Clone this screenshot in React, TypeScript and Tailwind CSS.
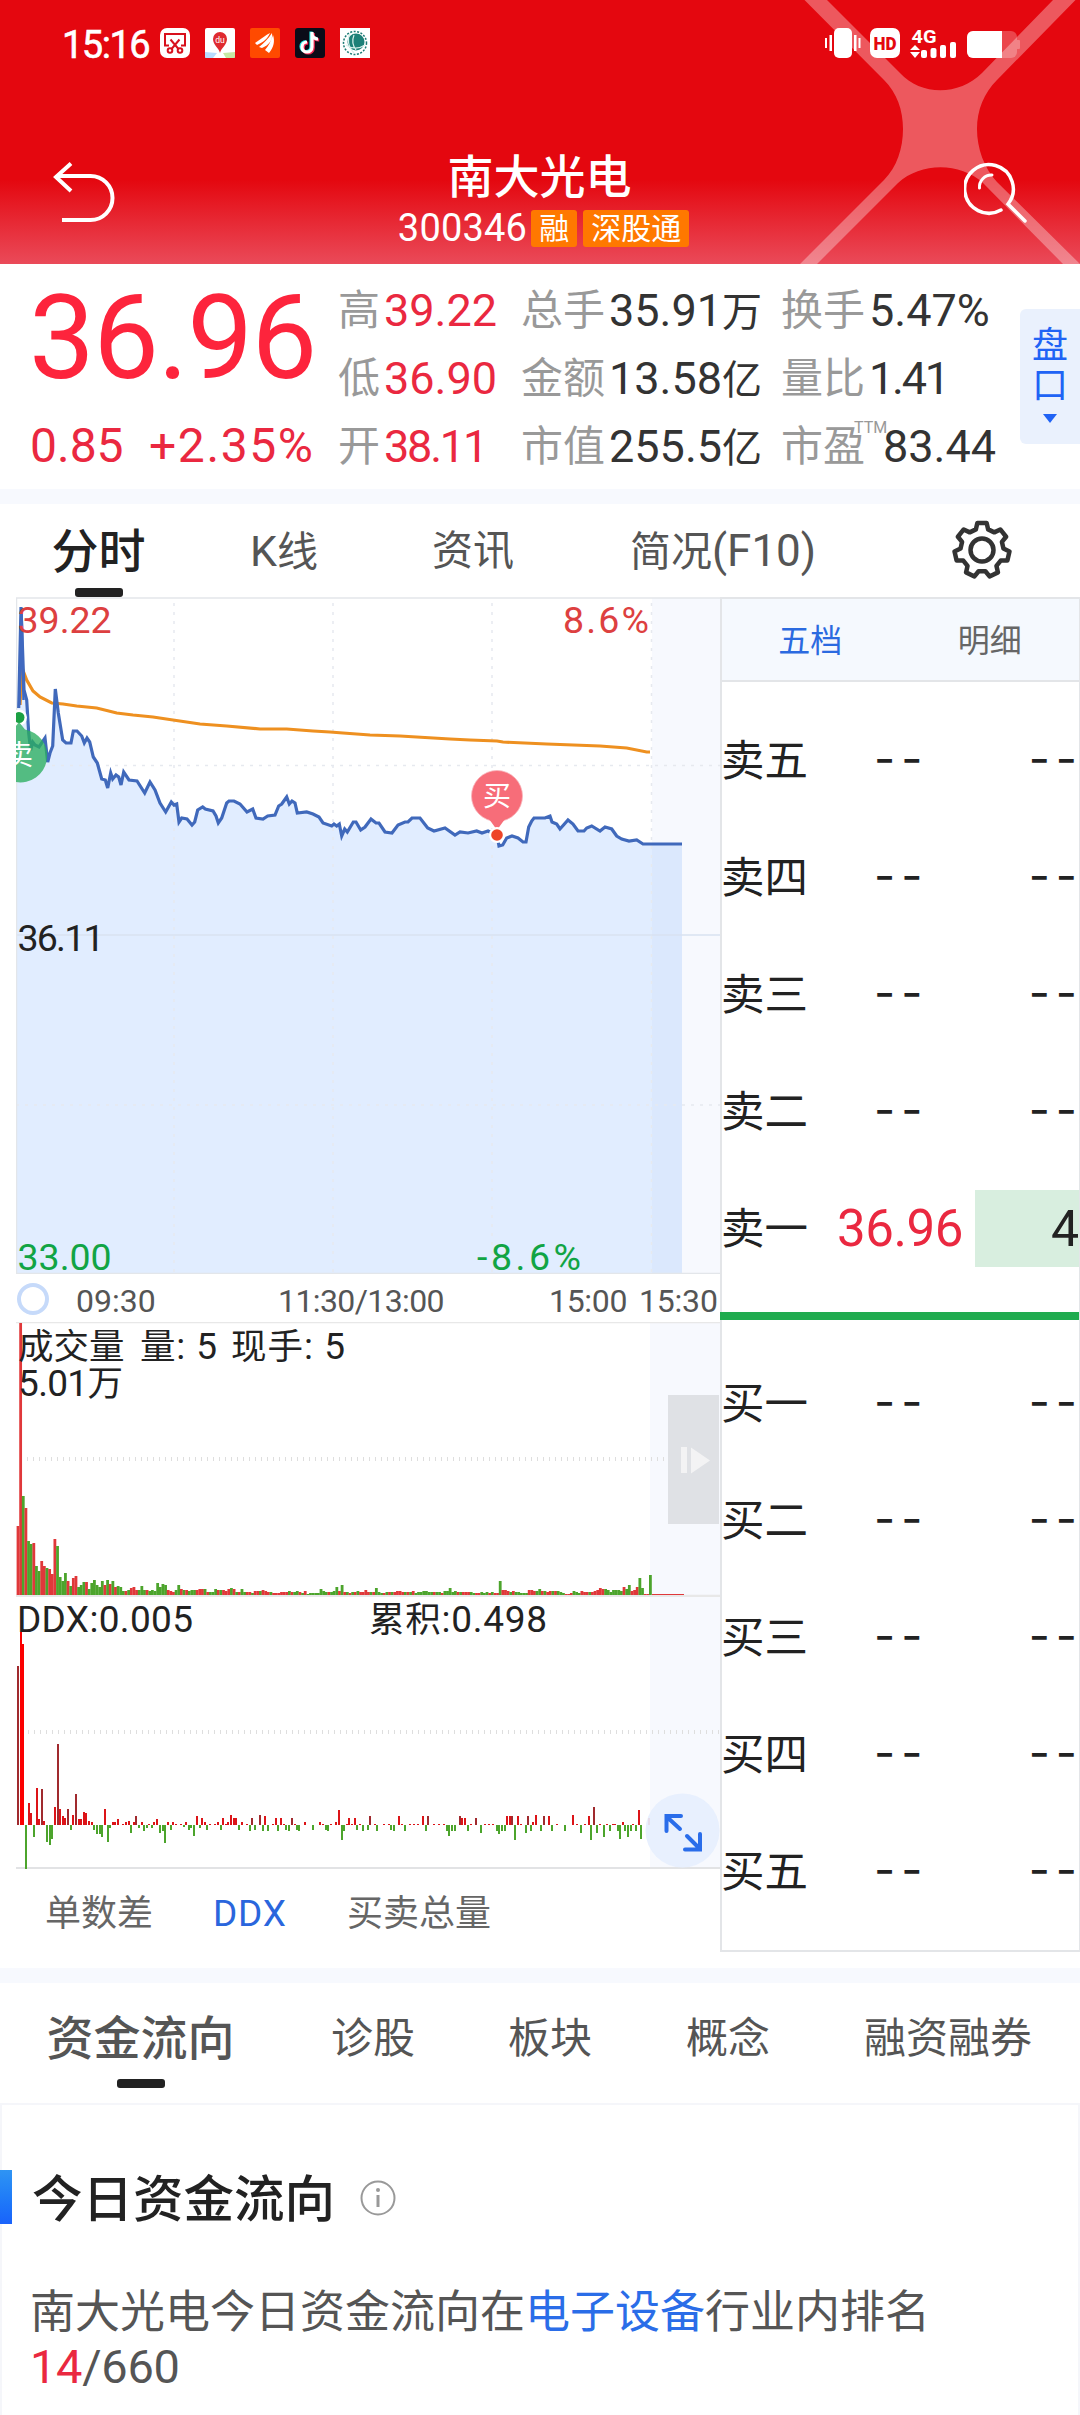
import type { ReactNode } from 'react'

const pricePoints =
  '18.7,708 21,607 24,690 26.7,700 28.7,733 30.7,750 32.7,742 35,745 39,747 45,738 47.7,762 50,753 52.7,746 55.3,689 58.3,713 62.7,740 66,743 71,743 73.3,731 77,731 81.7,736 84.3,743 87,738 89.7,742 93.3,757 97.3,763 101.7,779 105.3,780 107.7,788 110.7,773 112.7,779 116,775 118.7,777 121,785 123.7,772 129,780 137,781 144.7,793 150,782 155,790 160,803 165.7,812 171.3,802 174,805 176.7,804 179,822 181.7,818 187,819 192,825 194.7,822 197.7,810 202.7,807 205.3,809 213,811 216,816 218.3,823 221.7,818 226.7,803 229,801 234,801 240,804 247,812 252.7,809 256,818 263,819 267.7,816 275,815 278.7,806 281.7,804 286.7,797 289.3,804 292,801 295,803 297.3,813 306.7,812 313,814 319,817 323,823 331.7,826 334,824 336.7,826 339.3,824 341.7,836 344.7,829 347.3,832 353.3,822 356,822 360.7,830 365,827 371,819 376,823 379,823 385,832 392,833 398,825 405,822 408,822 412,818 420,818 427.7,828 434,831 445,828 455,835 460,832 468,833 476.7,831 482,833 488,831 492,833 497,835 499,846 502.7,845 506.7,838 512,836 518,838 523,842 526,842 528.7,827 531.7,821 534,818 545,818 550,816 552,822 556.7,824 560,829 568,820 573,824 578,831 584,831 586.7,828 591.7,826 600,831 605,827 611.7,829 616.7,836 621.7,839 629,841 636.7,840 643,844 652,844 682,844'

const avgPoints =
  '20,705 22,668 24,673 26.7,680 33,691 40,697 51.7,703 63,704 76.7,706 96.7,708 116.7,713 133,715 153,717 173,720 200,724 226.7,726 260,729 286.7,729 313,731 330,732 343,733 370,735 400,736 450,739 470,740 497,741 503,742 546.7,744 600,746 626.7,748 646.7,752 650,752'

// one entry per minute, positive = up (red), negative = down (green)
const volume = [
  69, 272, -99, 87, -54, -51, 52, -29, -24, 34, 29, -27, 26, 21, 56, -49, -18, -14, -22, 14,
  -9, 17, 19, -8, -10, -13, 13, -6, -12, -15, -10, -8, -14, 10, -15, 11, -14, 8, -9, -8,
  -4, 4, -5, 7, 8, 5, -5, -9, -5, 5, -4, -5, -4, -12, -8, -11, -10, 5, 4, 3,
  -5, -10, 6, -5, 5, -4, -5, -5, 5, 6, 6, -6, 3, -3, -3, -6, 5, -5, 5, 4,
  6, -7, 6, -3, 3, -6, -3, 3, 3, -2, 4, 4, -4, 5, 4, 3, -3, 2, 2, 2,
  3, 3, 3, -4, 3, -3, -4, 3, -2, 4, -1, -2, -2, -2, -2, -6, -4, -3, 3, -3,
  -4, -8, 4, -10, 3, -3, 2, -3, 3, -4, 3, 3, 5, 3, -3, 3, -7, -3, -2, 2,
  -3, 3, -3, 3, 4, 4, 3, -3, 3, -3, 4, -2, -3, -3, -4, -4, -3, -3, 3, -3,
  -3, 2, -4, -4, -7, -3, -4, 3, -3, 3, 3, 3, -3, -2, 2, 2, -3, -2, -3, 2,
  -3, 2, 2, -14, 5, 5, 4, -3, 4, -3, -3, -2, -2, -2, 5, 5, 4, -4, -6, 4,
  -4, 3, 4, -4, 4, -4, -3, -2, 1, 1, 2, -4, -3, -2, 4, 3, 3, -3, 3, 4,
  5, 7, 6, -6, -5, -3, -5, -5, -5, -4, 8, -6, -10, 4, 5, 8, -17, -7, 1, 1,
  -20,
]

// [x, height above the zero line]
const ddx: number[][] = [
  [18, 159], [21, 193], [23, 181], [26, -44], [29, 22], [31, 12], [34, -12], [37, 37], [39, 6], [42, 36],
  [44, 4], [47, -17], [50, -20], [52, -14], [55, 18], [58, 81], [60, 16], [63, 9], [65, 7], [68, 16],
  [71, -5], [73, 10], [76, 31], [79, 6], [81, 6], [84, 13], [86, 12], [89, 4], [92, 3], [94, -5],
  [97, -9], [100, -9], [102, -12], [105, 16], [108, -17], [110, -3], [113, 3], [115, 3], [118, 6], [123, 1],
  [126, 3], [129, 4], [131, -8], [134, 3], [136, 9], [139, -3], [142, 3], [144, -6], [147, -3], [149, 1],
  [152, -3], [154, 3], [157, 6], [160, -8], [163, -6], [165, -18], [168, 3], [171, -5], [173, 3], [176, 1],
  [181, 1], [184, -2], [186, 3], [189, -5], [191, -3], [194, -11], [197, 9], [200, -3], [202, 7], [205, 3],
  [207, -5], [210, 1], [215, 1], [218, 3], [221, -5], [223, 7], [226, 1], [228, 3], [231, 10], [234, 7],
  [236, 7], [239, -5], [242, 3], [247, 1], [250, -6], [252, 7], [255, -5], [260, 10], [263, -6], [265, 9],
  [268, -6], [273, 1], [276, 7], [278, -6], [281, 7], [284, 1], [286, -5], [289, -6], [292, 7], [295, 1],
  [297, -5], [299, -6], [305, 3], [313, -5], [320, 3], [323, 1], [326, -5], [328, -6], [331, 1], [336, 3],
  [339, 15], [342, -15], [344, -6], [347, 1], [349, 7], [352, 1], [355, 7], [357, -5], [360, 1], [363, -6],
  [368, -5], [370, 9], [375, 1], [377, -6], [384, 1], [389, 1], [391, -5], [394, -6], [399, 9], [402, 1],
  [405, -6], [410, 1], [414, 1], [418, 1], [423, 9], [426, -6], [428, 9], [434, 1], [439, 1], [444, 1],
  [447, -6], [449, -11], [452, -6], [455, -6], [460, 9], [462, 7], [465, 7], [468, -6], [471, 1], [476, 7],
  [481, -8], [485, 1], [489, 1], [493, 1], [497, -6], [499, -9], [502, -6], [505, -6], [507, 9], [510, 9],
  [512, 9], [515, -15], [518, 9], [521, 1], [526, -8], [528, 9], [531, -6], [533, 3], [536, 10], [541, -6],
  [544, 9], [549, 9], [552, -6], [557, 1], [565, -6], [573, 10], [577, 1], [581, -8], [585, 1], [589, 9],
  [591, -15], [594, 18], [597, -8], [600, 1], [604, -12], [607, 1], [610, -6], [613, 1], [615, 1], [618, -6],
  [620, -14], [623, 3], [625, -6], [628, -12], [631, -6], [633, 1], [636, -6], [639, 15], [641, -14], [649, 7],
]

const darkRed = [18, 42, 58, 68, 76, 136, 252, 260, 292, 370, 428, 460, 476, 512, 528, 544, 594]

type Quote = { label: string; value: string; unit?: string; ttm?: boolean; tight?: boolean }

const quotes: Quote[][] = [
  [
    { label: '高', value: '39.22' },
    { label: '低', value: '36.90' },
    { label: '开', value: '38.11', tight: true },
  ],
  [
    { label: '总手', value: '35.91', unit: '万' },
    { label: '金额', value: '13.58', unit: '亿' },
    { label: '市值', value: '255.5', unit: '亿' },
  ],
  [
    { label: '换手', value: '5.47%' },
    { label: '量比', value: '1.41', tight: true },
    { label: '市盈', value: '83.44', ttm: true },
  ],
]

const sells = ['卖五', '卖四', '卖三', '卖二', '卖一']
const buys = ['买一', '买二', '买三', '买四', '买五']

// seven-tooth cog outline
const gearPath = (() => {
  const pts: string[] = []
  for (let i = 0; i < 7; i++) {
    const mid = (i * 2 * Math.PI) / 7 - Math.PI / 2
    ;[[-0.29, 21.5], [-0.17, 27.5], [0.17, 27.5], [0.29, 21.5]].forEach(([a, r]) => {
      pts.push(`${(30 + r * Math.cos(mid + a)).toFixed(2)} ${(30 + r * Math.sin(mid + a)).toFixed(2)}`)
    })
  }
  return `M${pts.join('L')}Z`
})()

function StatusBar() {
  return (
    <div className="flex h-[84px] items-center pl-[62px] pt-[1px] text-white">
      <span className="w-[98px] whitespace-nowrap pt-[4px] text-[38px] leading-[44px] tracking-[-1.500px] [-webkit-text-stroke:0.600px_white]">15:16</span>

      <div className="flex gap-[15px]">
        <svg width="30" height="30" viewBox="0 0 30 30" fill="none" stroke="#d8101c" strokeWidth="2">
          <rect width="30" height="30" rx="7" fill="#fff" stroke="none" />
          <path d="M9 17.500H5V6h20v11.500h-4" />
          <path d="M10.500 11.500l8 9.500M19.500 11.500l-8 9.500" />
          <circle cx="10" cy="22.500" r="2.300" />
          <circle cx="20" cy="22.500" r="2.300" />
        </svg>
        <svg width="30" height="30" viewBox="0 0 30 30">
          <rect width="30" height="30" rx="2" fill="#fff" />
          <path d="M0 24l12 1-4 5H1a1 1 0 01-1-1z" fill="#b9dcff" />
          <path d="M18 25l12-1v5a1 1 0 01-1 1h-8z" fill="#c6e8a4" />
          <path d="M15 25c-1-5-7-8-7-14a7 7 0 0114 0c0 6-6 9-7 14z" fill="#df2a30" />
          <text x="15" y="14.500" fontSize="8.500" fill="#fff" textAnchor="middle">du</text>
        </svg>
        <svg width="30" height="30" viewBox="0 0 30 30">
          <rect width="30" height="30" rx="2" fill="#ff4a00" />
          <path d="M5 15C11 11 16 7 20 5c-2 5-6 9-13 12zM9 19c5-4 9-8 13-14 1 7-3 12-10 15zM15 22c4-5 6-9 8-15 2 6 1 12-4 18z" fill="#fff" />
        </svg>
        <svg width="30" height="30" viewBox="0 0 30 30" fill="none" strokeWidth="3.200">
          <rect width="30" height="30" rx="3" fill="#0b0b18" />
          <path d="M17 4v15a5 5 0 11-5-5M17 5c0 4 3 6 6 6" stroke="#25e5e0" transform="translate(-1 -0.500)" />
          <path d="M17 4v15a5 5 0 11-5-5M17 5c0 4 3 6 6 6" stroke="#f42a55" transform="translate(1.200 1)" />
          <path d="M17 4v15a5 5 0 11-5-5M17 5c0 4 3 6 6 6" stroke="#fff" />
        </svg>
        <svg width="30" height="30" viewBox="0 0 30 30" fill="none">
          <rect width="30" height="30" fill="#fff" />
          <circle cx="15" cy="15" r="11.500" stroke="#1b7a74" strokeWidth="1.500" strokeDasharray="2 1.500" />
          <circle cx="16" cy="14" r="8.500" fill="#1d8078" />
          <path d="M10 5c-3 6-2 14 4 20M6 17c6 4 13 4 19 0M14 7c-2 5-1 11 2 15" stroke="#d8f0ec" strokeWidth="1.200" />
        </svg>
      </div>

      <svg className="ml-[455px]" width="196" height="30" viewBox="825 27 196 30" fill="#fff">
        <rect x="834" y="27" width="18" height="30" rx="5" />
        <path d="M825 37h2v10h-2zM829.500 34h2.500v16h-2.500zM854 34h2.500v16H854zM858.500 37h2v10h-2z" />
        <rect x="870" y="27" width="30" height="30" rx="7" />
        <text x="885" y="49" fontSize="19" fontWeight="900" textAnchor="middle" fill="#e4070f" textLength="23" lengthAdjust="spacingAndGlyphs">HD</text>
        <text x="911.500" y="41.500" fontSize="19" fontWeight="700" textLength="25" lengthAdjust="spacingAndGlyphs">4G</text>
        <path d="M910 49l5-5 5 5zM910 51h10l-5 6z" />
        <rect x="921" y="49" width="6" height="8" rx="2" />
        <rect x="930.500" y="47" width="6" height="10" rx="2" />
        <rect x="940" y="44" width="6" height="13" rx="2" />
        <rect x="950" y="41" width="6" height="16" rx="2" />
        <rect x="967" y="30" width="50" height="27" rx="6" fillOpacity="0.25" />
        <path d="M1017 39h2a1 1 0 011 1v7a1 1 0 01-1 1h-2z" fillOpacity="0.25" />
        <path d="M973 30h29v27h-29a6 6 0 01-6-6V36a6 6 0 016-6z" />
      </svg>
    </div>
  )
}

function Header() {
  return (
    <header className="relative h-[264px] bg-[linear-gradient(180deg,#e4070f_0%,#e4070f_68%,#ea4a59_100%)]">
      <svg className="absolute inset-0" width="1080" height="264" viewBox="0 0 1080 264" fill="#fff" fillOpacity="0.33">
        <path d="M804.500 0H827L900 73C921 96 959 96 982 73L1053 0h22.500L997 80c-13 13-20 30-20 49s7 39 20 53l83 82h-17l-80-81c-23-21-62-21-85 0l-81 81h-17l84-84c13-13 19-32 19-51s-6-36-19-49z" />
      </svg>
      <div className="relative">
        <StatusBar />
        <div className="flex h-[180px] justify-between px-[52px]">
          <svg className="mt-[76px]" width="64" height="64" viewBox="52 160 64 64" fill="none" stroke="#fff" strokeWidth="4">
            <path d="M71 163.500L56 177l15 14M57 176h33.500a22 22 0 010 44H62" />
          </svg>
          <div className="flex flex-col items-center pl-[7px] pt-[65px]">
            <h1 className="pr-[8px] text-[46px] font-medium leading-[56px] text-white">南大光电</h1>
            <div className="mt-[3px] flex h-[40px] items-center text-white">
              <span className="text-[38px] leading-[40px] tracking-[0.200px]">300346</span>
              <span className="ml-[4px] h-[37px] w-[46px] rounded-[3px] bg-[#ff7800] text-center text-[30px] leading-[38px]">融</span>
              <span className="ml-[6px] h-[37px] w-[106px] rounded-[3px] bg-[#ff7800] text-center text-[30px] leading-[38px]">深股通</span>
            </div>
          </div>
          <svg className="mt-[76px]" width="64" height="64" viewBox="964 160 64 64" fill="none" stroke="#fff" strokeWidth="3.500" strokeLinecap="round">
            <path d="M1001 210A24.300 24.300 0 1 1 1008 204L1025 221" />
            <path d="M979.500 188a12 12 0 0112.500-13" strokeWidth="3" />
          </svg>
        </div>
      </div>
    </header>
  )
}

function QuoteBoard() {
  return (
    <section className="flex h-[225px] pt-[13px]">
      <div className="w-[338px] pl-[29px] text-[#fd243c]">
        <div className="h-[135px] pt-[2px] text-[117px] leading-[119px] tracking-[-1.400px]">36.96</div>
        <div className="flex h-[68px] items-center whitespace-nowrap text-[48px] leading-[68px] text-[#ea2840]">
          <span className="ml-[1px] w-[119px]">0.85</span>
          <span className="tracking-[1.600px]">+2.35%</span>
        </div>
      </div>
      {quotes.map((col, c) => (
        <div key={c} className={['w-[183px]', 'w-[260px]', 'w-[239px]'][c]}>
          {col.map(q => (
            <div key={q.label} className="relative flex h-[68px] whitespace-nowrap leading-[68px]">
              <span className="mr-[4px] text-[42px] text-[#999]">{q.label}</span>
              {q.ttm && <span className="absolute left-[73px] top-[5px] text-[16px] leading-[20px] text-[#999]">TTM</span>}
              <span className={`text-[45px] ${c === 0 ? 'text-[#ea2840]' : 'text-[#333]'} ${q.ttm ? 'ml-[14px]' : ''} ${q.tight ? 'tracking-[-2.200px]' : ''}`}>
                {q.value}
                {q.unit && <span className="text-[40px]">{q.unit}</span>}
              </span>
            </div>
          ))}
        </div>
      ))}
      <div className="mt-[32px] flex h-[135px] w-[60px] flex-col items-center rounded-l-[6px] bg-[#eaf1fd] pt-[17px] text-[36px] leading-[40px] text-[#2063f5]">
        <span>盘</span>
        <span>口</span>
        <svg className="mt-[8px]" width="14" height="9" viewBox="0 0 14 9" fill="#2063f5">
          <path d="M0 0h14L7 9z" />
        </svg>
      </div>
    </section>
  )
}

function ChartTabs() {
  return (
    <nav className="flex h-[93px] whitespace-nowrap text-[41px] leading-[94px] text-[#555]">
      <div className="flex w-[200px] flex-col items-center pr-[3px] text-[47px] font-medium text-[#222]">
        <span className="h-[84px] pt-[1px]">分时</span>
        <span className="h-[9px] w-[48px] rounded-[3px] bg-[#222]" />
      </div>
      <span className="w-[182px] pl-[50px]">
        <span className="text-[43px]">K</span>线
      </span>
      <span className="w-[248px] pl-[50px]">资讯</span>
      <span className="w-[322px]">
        简况<span className="text-[44px]">(F10)</span>
      </span>
      <svg className="mt-[16px]" width="60" height="60" viewBox="0 0 60 60" fill="none" stroke="#333" strokeWidth="4.500" strokeLinejoin="round">
        <path d={gearPath} />
        <circle cx="30" cy="30" r="11.500" />
      </svg>
    </nav>
  )
}

function PriceChart() {
  return (
    <svg width="704" height="677" viewBox="16 597 704 677">
      <rect x="652" y="598" width="68" height="676" fill="#f7f9fe" />
      <path d={`M${pricePoints.split(' ').slice(0, -1).join('L')}V1274H16V708Z`} fill="#e1edff" />
      <rect x="652" y="844" width="30" height="430" fill="#dbe8fd" />
      <g stroke="#e6e9ef" strokeWidth="1.500" strokeDasharray="3 6">
        <path d="M174 603V1274M333 603V1274M492 603V1274M651.500 603V1274M16 765.500H720M16 1105H720" />
      </g>
      <path d="M16 935H720" stroke="#d8e2f0" strokeWidth="1.500" />
      <path d="M16.500 1274V598H720M16 1273.500H720" fill="none" stroke="#e3e6ea" strokeWidth="1.500" />
      <polyline points={avgPoints} fill="none" stroke="#ee9020" strokeWidth="3.200" />
      <polyline points={pricePoints} fill="none" stroke="#4069bb" strokeWidth="3.200" />
      <path d="M19.500 705L21.500 608L23.500 700" fill="none" stroke="#4069c0" strokeWidth="2.500" />

      <circle cx="19" cy="717.500" r="8" fill="#fff" />
      <circle cx="19" cy="717.500" r="5.500" fill="#1ba043" />
      <path d="M16 726l3-4 6 7.500a26 26 0 11-9 52.500z" fill="#2aae5f" fillOpacity="0.78" />
      <text x="5" y="765" fontSize="28" fill="#fff">卖</text>

      <circle cx="497" cy="796" r="25.500" fill="#f76d79" stroke="#f9b5bb" strokeWidth="0.800" />
      <path d="M489 819h16l-8 11z" fill="#f76d79" />
      <circle cx="497" cy="835" r="8" fill="#fff" />
      <circle cx="497" cy="835" r="5.800" fill="#ee4528" />
      <text x="497" y="806" fontSize="28" fill="#fff" textAnchor="middle">买</text>

      <g fontSize="37.500">
        <text x="17.500" y="633" fill="#dd4040">39.22</text>
        <text x="563" y="633" textLength="86" fill="#dd4040">8.6%</text>
        <text x="17.500" y="951" fill="#222" textLength="87">36.11</text>
        <text x="17.500" y="1270" fill="#11a444">33.00</text>
        <text x="477" y="1270" fill="#11a444" textLength="104">-8.6%</text>
      </g>
    </svg>
  )
}

function TimeAxis() {
  return (
    <div className="flex h-[48px] items-center text-[32px] leading-[48px] text-[#555]">
      <span className="ml-[1px] mt-[2px] h-[32px] w-[32px] rounded-full border-4 border-[#c6dafa]" />
      <span className="ml-[27px] mt-[5px] w-[202px]">09:30</span>
      <span className="mt-[5px] w-[271px] tracking-[-0.600px]">11:30/13:00</span>
      <span className="mt-[5px] w-[90px] tracking-[-0.300px]">15:00</span>
      <span className="mt-[5px] tracking-[-0.200px]">15:30</span>
    </div>
  )
}

function VolumeChart() {
  return (
    <svg width="704" height="274" viewBox="16 1322 704 274">
      <rect x="650" y="1322" width="70" height="274" fill="#f7f9fe" />
      <path d="M16 1322.500H720M16 1595.500H720" stroke="#e8e8e8" strokeWidth="1.500" />
      <path d="M21 1459H720" stroke="#dedede" strokeWidth="4" strokeDasharray="1 5" />
      {volume.map((v, i) => (
        <rect
          key={i}
          x={16.6 + i * 2.635}
          y={1595 - Math.abs(v)}
          width="2.800"
          height={Math.abs(v)}
          fill={v > 0 ? '#e0383a' : '#4ca42c'}
        />
      ))}
      <rect x="652" y="1594" width="32" height="1" fill="#e0383a" />
      <rect x="668" y="1395" width="51" height="129" fill="#dfe1e5" />
      <path d="M681 1447h6v26h-6zM691 1447.500l19 13-19 13z" fill="#f3f3f4" />
      <g fontSize="37" fill="#222">
        <text x="18" y="1359" fontSize="35.500">成交量</text>
        <text x="140" y="1359" textLength="77"><tspan fontSize="35.500">量</tspan>: 5</text>
        <text x="231" y="1359" textLength="114"><tspan fontSize="35.500">现手</tspan>: 5</text>
        <text x="18" y="1395.500" textLength="105">5.01<tspan fontSize="35.500">万</tspan></text>
      </g>
    </svg>
  )
}

function DdxChart() {
  return (
    <svg width="704" height="273" viewBox="16 1596 704 273">
      <rect x="650" y="1596" width="70" height="272" fill="#f7f9fe" />
      <path d="M16 1596.500H720" stroke="#e8e8e8" strokeWidth="1" />
      <path d="M16 1868H720" stroke="#e2e3e5" strokeWidth="2" />
      <path d="M22 1732H720" stroke="#dedede" strokeWidth="4" strokeDasharray="1 5" />
      {ddx.map(([x, h]) => (
        <rect
          key={x}
          x={x - 1}
          y={h > 0 ? 1825 - h : 1825}
          width="2"
          height={Math.abs(h)}
          fill={h < 0 ? '#4ca42c' : darkRed.includes(x) ? '#a02a2e' : h > 150 ? '#fb0000' : '#dc1418'}
        />
      ))}
      <circle cx="682.500" cy="1830.500" r="37" fill="#e6effe" fillOpacity="0.920" />
      <g fill="none" stroke="#2a6dea" strokeWidth="4" strokeLinecap="round" strokeLinejoin="miter">
        <path d="M681 1816h-14.500v15M667 1817l13 12" />
        <path d="M685 1849.500h15V1834M699 1848l-12-12" />
      </g>
      <g fontSize="37" fill="#222">
        <text x="17" y="1631.500" textLength="176">DDX:0.005</text>
        <text x="369" y="1631.500" textLength="178"><tspan fontSize="35.500">累积</tspan>:0.498</text>
      </g>
    </svg>
  )
}

function OrderRow({ label, children }: { label: string; children?: ReactNode }) {
  return (
    <div className="flex h-[117px] items-center whitespace-nowrap text-[43.500px] leading-[60px] text-[#222]">
      <span className="-ml-[1px] w-[117px] pt-[2px]">{label}</span>
      {children ?? (
        <div className="flex flex-1 justify-between pb-[5px] pl-[36px] font-['Inter',sans-serif] text-[46px] tracking-[6px]">
          <span>--</span>
          <span className="-mr-[4px]">--</span>
        </div>
      )}
    </div>
  )
}

function OrderBook() {
  return (
    <aside className="h-[1355px] w-[360px] border-2 border-r border-[#e3e5e8]">
      <div className="flex h-[83px] border-b-2 border-[#e3e5e8] bg-[#f5f9fe] text-center text-[32px] leading-[85px]">
        <span className="flex-1 pr-[3px] text-[#2b6ae0]">五档</span>
        <span className="flex-1 pr-[1px] text-[#666]">明细</span>
      </div>
      <div className="h-[630px] pt-[20px]">
        {sells.map(s => (
          <OrderRow key={s} label={s}>
            {s === '卖一' ? (
              <>
                <span className="-ml-[1px] w-[138px] pt-[1px] text-[51px] tracking-[-0.400px] text-[#ea2840]">36.96</span>
                <span className="h-[77px] flex-1 bg-[#d8eedf] text-right text-[50px] leading-[79px]">4</span>
              </>
            ) : undefined}
          </OrderRow>
        ))}
      </div>
      <div className="-ml-[2px] h-[8px] bg-[#20ab4f]" />
      <div className="pt-[25px]">
        {buys.map(b => <OrderRow key={b} label={b} />)}
      </div>
    </aside>
  )
}

function FundFlow() {
  return (
    <section className="h-[312px] border-2 border-b-0 border-[#f5f6fa]">
      <div className="-ml-[2px] mt-[65px] flex h-[54px] items-center">
        <span className="h-[54px] w-[12px] bg-linear-to-b from-[#2f94f3] to-[#1a62fb]" />
        <h2 className="ml-[20px] pt-[5px] text-[50.500px] font-medium leading-[60px] text-[#222]">今日资金流向</h2>
        <svg className="ml-[25px] mt-[2px]" width="36" height="36" viewBox="0 0 36 36" fill="none" stroke="#999">
          <circle cx="18" cy="18" r="16.500" strokeWidth="2" />
          <path d="M18 15v12" strokeWidth="3" />
          <circle cx="18" cy="10" r="2" fill="#999" stroke="none" />
        </svg>
      </div>
      <p className="mt-[62px] pl-[28px] text-[45px] leading-[54px] text-[#555]">
        南大光电今日资金流向在<span className="text-[#2a6de8]">电子设备</span>行业内排名
        <br />
        <span className="text-[47px] tracking-[-0.300px]"><span className="text-[#ea2840]">14</span>/660</span>
      </p>
    </section>
  )
}

export default function App() {
  return (
    <div className="h-[2415px] w-[1080px] overflow-hidden bg-white font-['Roboto','Noto_Sans_CJK_SC',sans-serif]">
      <Header />
      <QuoteBoard />
      <div className="h-[15px] bg-[#f7f9fe]" />
      <ChartTabs />

      <main className="flex h-[1371px]">
        <div className="w-[720px] pl-[16px]">
          <div className="flex flex-col">
            <PriceChart />
            <TimeAxis />
            <VolumeChart />
            <DdxChart />
          </div>
          <div className="flex whitespace-nowrap pl-[29px] text-[36px] leading-[90px] text-[#666]">
            <span className="w-[168px]">单数差</span>
            <span className="w-[134px] text-[37px] tracking-[0.800px] text-[#2a66dd]">DDX</span>
            <span>买卖总量</span>
          </div>
        </div>
        <OrderBook />
      </main>

      <div className="h-[15px] bg-[#f7f9fe]" />
      <nav className="flex h-[120px] whitespace-nowrap pl-[46px] text-[42px] leading-[112px] text-[#555]">
        <div className="mr-[96px] flex w-[189px] flex-col items-center text-[47px] font-medium">
          <span className="h-[96px]">资金流向</span>
          <span className="h-[9px] w-[48px] rounded-[3px] bg-[#222]" />
        </div>
        <span className="w-[177px]">诊股</span>
        <span className="w-[178px]">板块</span>
        <span className="w-[178px]">概念</span>
        <span>融资融券</span>
      </nav>
      <FundFlow />
    </div>
  )
}
